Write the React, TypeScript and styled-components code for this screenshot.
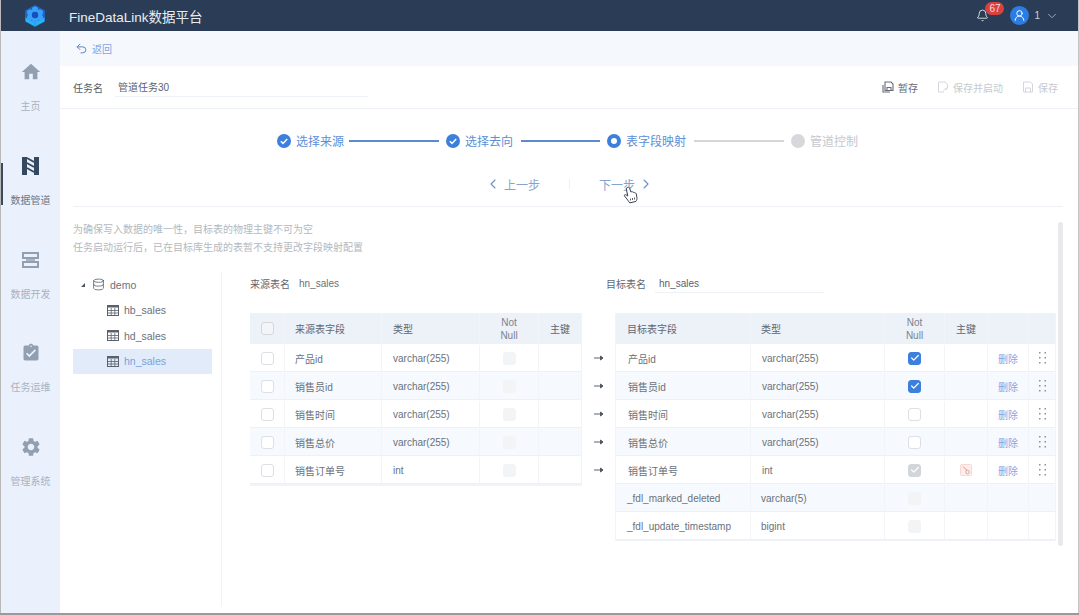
import React from 'react';
import styled, { createGlobalStyle } from 'styled-components';
import { MdHome, MdSettings, MdAssignmentTurnedIn } from 'react-icons/md';
import { ChevronLeft, ChevronRight, ChevronDown, Undo2, Bell, Database, Check, UserRound } from 'lucide-react';

const GlobalStyle = createGlobalStyle`
    html, body { margin: 0; padding: 0; height: 100%; overflow: hidden; background: #9a9a9a; }
    * { box-sizing: border-box; }
    body { font-family: "Liberation Sans", "Noto Sans CJK SC", sans-serif; font-size: 10px; color: #5a6270; }
`;

const BLUE = '#3d7fdc';
const LINE = '#eef1f6';

const SOURCE_COLS = '34px 97px 98px 59px 1fr';
const TARGET_COLS = '134px 134px 60px 43px 41px 1fr';

const sourceRows = [
    { name: '产品id', type: 'varchar(255)' },
    { name: '销售员id', type: 'varchar(255)' },
    { name: '销售时间', type: 'varchar(255)' },
    { name: '销售总价', type: 'varchar(255)' },
    { name: '销售订单号', type: 'int' },
];

const targetRows = [
    { name: '产品id', type: 'varchar(255)', check: 'on', mapped: true },
    { name: '销售员id', type: 'varchar(255)', check: 'on', mapped: true },
    { name: '销售时间', type: 'varchar(255)', check: 'off', mapped: true },
    { name: '销售总价', type: 'varchar(255)', check: 'off', mapped: true },
    { name: '销售订单号', type: 'int', check: 'locked', mapped: true, primary: true },
    { name: '_fdl_marked_deleted', type: 'varchar(5)', check: 'disabled', mapped: false },
    { name: '_fdl_update_timestamp', type: 'bigint', check: 'disabled', mapped: false },
];

const Logo = () => (
    <svg width="24" height="24" viewBox="0 0 24 24">
        <path d="M12 1l10 5.500v11L12 23 2 17.500v-11z" fill="#1c64cc" />
        <path d="M2.600 13.500L12 18.500l9.400-5v4L12 22.600l-9.400-5.200z" fill="#25b6f4" />
        <path d="M12 18.500v4" stroke="#1c8fe0" strokeWidth="1" />
        {[[12, 5.500], [17, 8.500], [17, 13.500], [12, 16], [7, 13.500], [7, 8.500]].map(([cx, cy]) => (
            <circle key={`${cx}-${cy}`} cx={cx} cy={cy} r="3" fill="#3aa0f6" />
        ))}
        <circle cx="12" cy="11" r="3.200" fill="#1150bd" />
    </svg>
);

const PipeIcon = () => (
    <svg width="17" height="18" viewBox="0 0 17 18">
        <rect x="0" y="0" width="5" height="18" fill="#34495f" />
        <rect x="12" y="0" width="5" height="18" fill="#34495f" />
        <path d="M5 1l7 4M5 6l7 4M5 11l7 4" stroke="#34495f" strokeWidth="1.800" fill="none" />
    </svg>
);

const DevIcon = () => (
    <svg width="17" height="16" viewBox="0 0 17 16" fill="none" stroke="#929fb0" strokeWidth="2">
        <path d="M1 1h15v5H1z" />
        <path d="M1 10h15v5H1z" />
        <path d="M4 8h9" strokeWidth="1.500" />
    </svg>
);

const CheckCircle = () => (
    <svg width="14" height="14" viewBox="0 0 14 14">
        <circle cx="7" cy="7" r="7" fill={BLUE} />
        <path d="M3.800 7.200l2.200 2.200 4.200-4.400" stroke="#fff" strokeWidth="1.500" fill="none" />
    </svg>
);

const TableIcon = () => (
    <svg width="12" height="11" viewBox="0 0 12 11" fill="none" stroke="#59616d" strokeWidth="1">
        <rect x="0.500" y="0.500" width="11" height="10" />
        <path d="M0.500 1.500h11" strokeWidth="2" />
        <path d="M0.500 5.500h11M0.500 8h11M4.200 3v7.500M7.800 3v7.500" strokeWidth="0.800" />
    </svg>
);

const DraftIcon = () => (
    <svg width="12" height="12" viewBox="0 0 12 12" fill="none" stroke="#666d78" strokeWidth="1.100">
        <path d="M3 1h6l2 2v6.500H3z" />
        <path d="M1 4v7h7" />
        <path d="M5 9.500V6.500h4v3" />
    </svg>
);

const SaveStartIcon = () => (
    <svg width="12" height="12" viewBox="0 0 12 12" fill="none" stroke="#d3d6db" strokeWidth="1">
        <path d="M7 11H1.500V1h6.500l2.500 2.500V7" />
        <path d="M6.500 9.500c.6-1.400 2-2 3.500-1.500M10 6.500V8H8.500" />
    </svg>
);

const SaveIcon = () => (
    <svg width="12" height="12" viewBox="0 0 12 12" fill="none" stroke="#d3d6db" strokeWidth="1">
        <path d="M1.500 1h7l2 2v8h-9z" />
        <path d="M3.500 11V7h5v4" />
    </svg>
);

const PrimaryIcon = () => (
    <svg width="12" height="12" viewBox="0 0 12 12" fill="none">
        <rect x="0.500" y="0.500" width="11" height="11" rx="1" fill="#fdeeec" stroke="#f6d8d5" />
        <path d="M3 2.500l4 4" stroke="#e2716b" strokeWidth="0.800" />
        <circle cx="7.500" cy="8" r="1.800" stroke="#c99a96" strokeWidth="0.800" />
    </svg>
);

const DragDots = () => (
    <svg width="7" height="12" viewBox="0 0 7 12" fill="#8a919c">
        {[0, 5, 10].map((y) => (
            <React.Fragment key={y}>
                <rect x="0" y={y} width="1.500" height="1.500" />
                <rect x="5.500" y={y} width="1.500" height="1.500" />
            </React.Fragment>
        ))}
    </svg>
);

const ArrowGlyph = () => (
    <svg width="10" height="6" viewBox="0 0 10 6" fill="none" stroke="#4a525e" strokeWidth="0.900">
        <path d="M0 3h8" />
        <path d="M6.500 1L9 3 6.500 5z" fill="#4a525e" />
    </svg>
);

const HandCursor = () => (
    <svg width="16" height="18" viewBox="0 0 16 18" fill="#fff" stroke="#3a3f46" strokeWidth="1">
        <path d="M4.500 1.500c1-.6 1.900 0 2.200 1l1.200 3.500.8-.3c.8-.2 1.200.2 1.500.7.700-.3 1.300 0 1.600.6.800-.2 1.300.3 1.500.9l.6 3.600c.2 1.500-.1 2.700-1 3.900l-6 1.500c-1.200-1.200-2.400-3.200-3.600-4.700L1.500 10c-.5-.9.400-1.800 1.300-1.300l2 1.300-1.500-7c-.1-.6.200-1.200.7-1.500z" />
        <path d="M7.500 12.500v2M9.500 12v2M11.500 11.500v2" strokeWidth="0.800" />
    </svg>
);

const App = () => {
    return (
        <>
            <GlobalStyle />
            <Shell>
                <TopBar>
                    <LogoSlot><Logo /></LogoSlot>
                    <Title>FineDataLink数据平台</Title>
                    <TopRight>
                        <BellWrap>
                            <Bell size={13} color="#e8edf3" strokeWidth={1.6} />
                            <Badge>67</Badge>
                        </BellWrap>
                        <Avatar><UserRound size={13} color="#fff" strokeWidth={1.8} /></Avatar>
                        <UserName>1</UserName>
                        <ChevronDown size={14} color="#a9b4c2" strokeWidth={1.5} />
                    </TopRight>
                </TopBar>
                <Body>
                    <Sidebar>
                        <NavItem><IconSlot><MdHome size={22} color="#929fb0" /></IconSlot><NavLabel>主页</NavLabel></NavItem>
                        <NavItem $active><IconSlot><PipeIcon /></IconSlot><NavLabel $active>数据管道</NavLabel></NavItem>
                        <NavItem><IconSlot><DevIcon /></IconSlot><NavLabel>数据开发</NavLabel></NavItem>
                        <NavItem><IconSlot><MdAssignmentTurnedIn size={20} color="#929fb0" /></IconSlot><NavLabel>任务运维</NavLabel></NavItem>
                        <NavItem><IconSlot><MdSettings size={22} color="#929fb0" /></IconSlot><NavLabel>管理系统</NavLabel></NavItem>
                    </Sidebar>
                    <Main>
                        <BackBar>
                            <Undo2 size={13} color="#5d86bd" strokeWidth={1.8} />
                            <BackText>返回</BackText>
                        </BackBar>
                        <TaskRow>
                            <TaskLabel>任务名</TaskLabel>
                            <TaskInput>管道任务30</TaskInput>
                            <Actions>
                                <ActionBtn><DraftIcon /> 暂存</ActionBtn>
                                <ActionBtn $disabled><SaveStartIcon /> 保存并启动</ActionBtn>
                                <ActionBtn $disabled><SaveIcon /> 保存</ActionBtn>
                            </Actions>
                        </TaskRow>
                        <Steps>
                            <CheckCircle /><StepText>选择来源</StepText><StepLine $w={90} $gap={5} />
                            <CheckCircle /><StepText>选择去向</StepText><StepLine $w={79} $gap={8} />
                            <CurrentDot /><StepText>表字段映射</StepText><StepLine $w={90} $gap={8} $muted />
                            <PendingDot /><StepText $muted>管道控制</StepText>
                        </Steps>
                        <StepNav>
                            <NavBtn><ChevronLeft size={16} strokeWidth={1.6} color="#6b8fc4" /> 上一步</NavBtn>
                            <NavDivider />
                            <NavBtn>下一步 <ChevronRight size={16} strokeWidth={1.6} color="#6b8fc4" /></NavBtn>
                            <CursorSlot><HandCursor /></CursorSlot>
                        </StepNav>
                        <Notes>
                            <div>为确保写入数据的唯一性，目标表的物理主键不可为空</div>
                            <div>任务启动运行后，已在目标库生成的表暂不支持更改字段映射配置</div>
                        </Notes>
                        <Work>
                            <Tree>
                                <TreeRoot>
                                    <Caret />
                                    <Database size={13} color="#59616d" strokeWidth={1.5} />
                                    <span>demo</span>
                                </TreeRoot>
                                <TreeLeaf><TableIcon />hb_sales</TreeLeaf>
                                <TreeLeaf><TableIcon />hd_sales</TreeLeaf>
                                <TreeLeaf $selected><TableIcon />hn_sales</TreeLeaf>
                            </Tree>
                            <Mapping>
                                <NameRow>
                                    <SourceName>
                                        <NameLabel>来源表名</NameLabel>
                                        <NameValue>hn_sales</NameValue>
                                    </SourceName>
                                    <TargetName>
                                        <NameLabel>目标表名</NameLabel>
                                        <NameField>hn_sales</NameField>
                                    </TargetName>
                                </NameRow>
                                <Tables>
                                    <SourceTable>
                                        <HeadRow $cols={SOURCE_COLS}>
                                            <Cell $center><Box $tone="head" /></Cell>
                                            <Cell $pad={10}>来源表字段</Cell>
                                            <Cell $pad={11}>类型</Cell>
                                            <Cell $center><NotNull>Not<br />Null</NotNull></Cell>
                                            <Cell $center>主键</Cell>
                                        </HeadRow>
                                        {sourceRows.map((row, i) => (
                                            <Row key={row.name} $cols={SOURCE_COLS} $alt={i % 2 === 1}>
                                                <Cell $center><Box /></Cell>
                                                <Cell $pad={10}>{row.name}</Cell>
                                                <Cell $pad={11}>{row.type}</Cell>
                                                <Cell $center><Box $tone="disabled" /></Cell>
                                                <Cell />
                                            </Row>
                                        ))}
                                    </SourceTable>
                                    <ArrowCol>
                                        {sourceRows.map((row) => (
                                            <ArrowSlot key={row.name}><ArrowGlyph /></ArrowSlot>
                                        ))}
                                    </ArrowCol>
                                    <TargetTable>
                                        <HeadRow $cols={TARGET_COLS}>
                                            <Cell $pad={11}>目标表字段</Cell>
                                            <Cell $pad={10}>类型</Cell>
                                            <Cell $center><NotNull>Not<br />Null</NotNull></Cell>
                                            <Cell $center>主键</Cell>
                                            <Cell />
                                            <Cell />
                                        </HeadRow>
                                        {targetRows.map((row, i) => (
                                            <Row key={row.name} $cols={TARGET_COLS} $alt={i % 2 === 1}>
                                                <Cell $pad={row.mapped ? 12 : 11}>{row.name}</Cell>
                                                <Cell $pad={row.mapped ? 11 : 10}>{row.type}</Cell>
                                                <Cell $center>
                                                    {row.check === 'on' && <Box $tone="on"><Check size={10} color="#fff" strokeWidth={3} /></Box>}
                                                    {row.check === 'off' && <Box />}
                                                    {row.check === 'locked' && <Box $tone="locked"><Check size={10} color="#fff" strokeWidth={3} /></Box>}
                                                    {row.check === 'disabled' && <Box $tone="disabled" />}
                                                </Cell>
                                                <Cell $center>{row.primary && <PrimaryIcon />}</Cell>
                                                <Cell $center>{row.mapped && <DeleteLink>删除</DeleteLink>}</Cell>
                                                <Cell $center>{row.mapped && <DragDots />}</Cell>
                                            </Row>
                                        ))}
                                    </TargetTable>
                                </Tables>
                            </Mapping>
                        </Work>
                        <ScrollThumb />
                    </Main>
                </Body>
            </Shell>
        </>
    );
};

export default App;


const Shell = styled.div`
    height: 613px;
    display: flex;
    flex-direction: column;
    background: #fff;
    border-left: 1px solid #b9b9b9;
    border-right: 1px solid #c4c4c4;
`
const TopBar = styled.header`
    height: 31px;
    flex: none;
    display: flex;
    align-items: center;
    background: #2b3d56;
    color: #e8edf3;
`
const LogoSlot = styled.div`
    width: 68px;
    padding-left: 22px;
    display: flex;
    align-items: center;
`
const Title = styled.div`
    font-size: 13.5px;
`
const TopRight = styled.div`
    margin-left: auto;
    padding-right: 19px;
    display: flex;
    align-items: center;
`
const BellWrap = styled.div`
    position: relative;
    display: flex;
    margin-right: 21px;
`
const Badge = styled.span`
    position: absolute;
    left: 9px;
    top: -7px;
    width: 19px;
    height: 13px;
    border-radius: 7px;
    background: #d9413f;
    color: #f6dcdc;
    font-size: 10px;
    line-height: 13px;
    text-align: center;
`
const Avatar = styled.div`
    width: 19px;
    height: 19px;
    border-radius: 50%;
    background: #2b7de3;
    display: flex;
    align-items: center;
    justify-content: center;
`
const UserName = styled.span`
    margin: 0 5px 0 5px;
    font-size: 10px;
    color: #c9d2dc;
`
const Body = styled.div`
    flex: 1;
    min-height: 0;
    display: flex;
`
const Sidebar = styled.nav`
    width: 59px;
    flex: none;
    padding-top: 29px;
    background: #eaf1fd;
    display: flex;
    flex-direction: column;
`
const NavItem = styled.div<{ $active?: boolean }>`
    position: relative;
    height: 93.800px;
    display: flex;
    flex-direction: column;
    align-items: center;
    &::before {
        content: '';
        display: ${({ $active }) => ($active ? 'block' : 'none')};
        position: absolute;
        left: 0;
        top: 9px;
        width: 2px;
        height: 42px;
        background: #3a4a60;
    }
`
const IconSlot = styled.div`
    height: 24px;
    display: flex;
    align-items: center;
    justify-content: center;
`
const NavLabel = styled.div<{ $active?: boolean }>`
    margin-top: 17px;
    font-size: 10px;
    line-height: 12px;
    color: ${({ $active }) => ($active ? '#6c7684' : '#aab2bd')};
`
const Main = styled.main`
    position: relative;
    flex: 1;
    min-width: 0;
    display: flex;
    flex-direction: column;
`
const BackBar = styled.div`
    height: 35px;
    flex: none;
    padding-left: 15px;
    display: flex;
    align-items: center;
    gap: 4px;
    background: #f5f8fc;
`
const BackText = styled.span`
    font-size: 10px;
    color: #7ea6e0;
`
const TaskRow = styled.div`
    height: 43px;
    flex: none;
    padding: 0 20px 0 13px;
    display: flex;
    align-items: center;
    border-bottom: 1px solid ${LINE};
`
const TaskLabel = styled.div`
    width: 42px;
    font-size: 10px;
    color: #555c68;
`
const TaskInput = styled.div`
    width: 253px;
    height: 20px;
    padding: 4px 0 0 3px;
    font-size: 10px;
    line-height: 13px;
    color: #5a6270;
    border-bottom: 1px solid ${LINE};
`
const Actions = styled.div`
    margin-left: auto;
    display: flex;
    gap: 19px;
`
const ActionBtn = styled.div<{ $disabled?: boolean }>`
    display: flex;
    align-items: center;
    gap: 4px;
    font-size: 10px;
    color: ${({ $disabled }) => ($disabled ? '#c6cad0' : '#666d78')};
`
const Steps = styled.div`
    height: 63px;
    flex: none;
    padding: 0 0 0 217px;
    display: flex;
    align-items: center;
`
const StepText = styled.span<{ $muted?: boolean }>`
    margin-left: 5px;
    font-size: 12px;
    color: ${({ $muted }) => ($muted ? '#c4c8ce' : '#5b8fd6')};
`
const StepLine = styled.div<{ $w: number; $gap: number; $muted?: boolean }>`
    width: ${({ $w }) => $w}px;
    height: 2px;
    margin: 0 7px 0 ${({ $gap }) => $gap}px;
    background: ${({ $muted }) => ($muted ? '#d4d6da' : '#5b8bcb')};
`
const CurrentDot = styled.div`
    width: 14px;
    height: 14px;
    border-radius: 50%;
    border: 4px solid ${BLUE};
    background: #fff;
`
const PendingDot = styled.div`
    width: 14px;
    height: 14px;
    border-radius: 50%;
    background: #d6d8dc;
`
const StepNav = styled.div`
    position: relative;
    height: 35px;
    flex: none;
    margin: 0 15px 0 13px;
    padding: 0 0 10px 412px;
    display: flex;
    align-items: center;
    border-bottom: 1px solid ${LINE};
`
const NavBtn = styled.div`
    display: flex;
    align-items: center;
    gap: 3px;
    font-size: 12px;
    color: #84a3cf;
`
const NavDivider = styled.div`
    width: 1px;
    height: 10px;
    margin: 0 29px;
    background: #eef0f3;
`
const CursorSlot = styled.div`
    position: absolute;
    left: 550px;
    top: 14px;
    display: flex;
`
const Notes = styled.div`
    flex: none;
    padding: 14px 0 0 13px;
    font-size: 10px;
    line-height: 18px;
    color: #b4b9c0;
`
const Work = styled.div`
    flex: 1;
    min-height: 0;
    margin-top: 15px;
    margin-bottom: 7px;
    display: flex;
`
const Tree = styled.div`
    width: 162px;
    flex: none;
    padding: 0 9px 0 13px;
    border-right: 1px solid #eff2f7;
`
const TreeRoot = styled.div`
    height: 25.500px;
    padding-left: 8px;
    display: flex;
    align-items: center;
    gap: 5px;
    font-size: 10.500px;
    color: #6a717c;
`
const Caret = styled.span`
    width: 0;
    height: 0;
    margin-right: 2px;
    border-style: solid;
    border-width: 0 0 4px 4px;
    border-color: transparent transparent #4c5460 transparent;
`
const TreeLeaf = styled.div<{ $selected?: boolean }>`
    height: 25.500px;
    padding-left: 34px;
    display: flex;
    align-items: center;
    gap: 5px;
    font-size: 10.500px;
    color: ${({ $selected }) => ($selected ? '#78a2e0' : '#6a717c')};
    background: ${({ $selected }) => ($selected ? '#e1ebfa' : 'transparent')};
`
const Mapping = styled.div`
    flex: 1;
    min-width: 0;
    padding: 0 22px 0 28px;
`
const NameRow = styled.div`
    height: 41px;
    padding-top: 1px;
    display: flex;
    align-items: flex-start;
`
const SourceName = styled.div`
    width: 356px;
    height: 20px;
    display: flex;
    align-items: center;
`
const TargetName = styled.div`
    height: 20px;
    display: flex;
    align-items: center;
`
const NameLabel = styled.span`
    font-size: 10px;
    color: #5f6672;
`
const NameValue = styled.span`
    margin-left: 9px;
    font-size: 10px;
    color: #6a717c;
`
const NameField = styled.div`
    width: 169px;
    height: 20px;
    margin-left: 9px;
    padding-left: 4px;
    font-size: 10px;
    line-height: 21px;
    color: #5a6270;
    border-bottom: 1px solid ${LINE};
`
const Tables = styled.div`
    display: flex;
    align-items: flex-start;
`
const SourceTable = styled.div`
    width: 332px;
    flex: none;
    border: solid #f0f3f7;
    border-width: 0 1px 2px 0;
`
const TargetTable = styled.div`
    width: 441px;
    flex: none;
    border: solid #f0f3f7;
    border-width: 0 1px 1px 1px;
`
const ArrowCol = styled.div`
    width: 33px;
    flex: none;
    padding-top: 31px;
`
const ArrowSlot = styled.div`
    height: 28px;
    display: flex;
    align-items: center;
    justify-content: center;
`
const Row = styled.div<{ $cols: string; $alt?: boolean }>`
    height: 28px;
    padding-top: 1px;
    display: grid;
    grid-template-columns: ${({ $cols }) => $cols};
    background: ${({ $alt }) => ($alt ? '#f6f9fd' : '#fff')};
    border-bottom: 1px solid #edf1f7;
    color: #6a717c;
`
const HeadRow = styled(Row)`
    height: 31px;
    padding-top: 0;
    background: #edf1f8;
    border-bottom: none;
    color: #5f6672;
`
const Cell = styled.div<{ $center?: boolean; $pad?: number }>`
    display: flex;
    align-items: center;
    justify-content: ${({ $center }) => ($center ? 'center' : 'flex-start')};
    padding-left: ${({ $pad }) => $pad || 0}px;
    font-size: 10px;
    border-left: 1px solid #f2f4f8;
    white-space: nowrap;
    &:first-child { border-left: none; }
`
const NotNull = styled.div`
    font-size: 10px;
    line-height: 13px;
    text-align: center;
    color: #7c838e;
`
const Box = styled.div<{ $tone?: 'on' | 'locked' | 'disabled' | 'head' }>`
    width: 13px;
    height: 13px;
    border-radius: 3px;
    display: flex;
    align-items: center;
    justify-content: center;
    border: 1px solid ${({ $tone }) =>
        $tone === 'on' ? BLUE : $tone === 'locked' ? '#d2d5d9' : $tone === 'disabled' ? '#f3f4f6' : $tone === 'head' ? '#d3d7de' : '#dcdfe4'};
    background: ${({ $tone }) =>
        $tone === 'on' ? BLUE : $tone === 'locked' ? '#d2d5d9' : $tone === 'disabled' ? '#f3f4f6' : $tone === 'head' ? '#f3f5f9' : '#fff'};
`
const DeleteLink = styled.span`
    font-size: 10px;
    color: #7ea9e6;
`
const ScrollThumb = styled.div`
    position: absolute;
    left: 998px;
    top: 191px;
    width: 5px;
    height: 324px;
    border-radius: 3px;
    background: #e9e9eb;
`
